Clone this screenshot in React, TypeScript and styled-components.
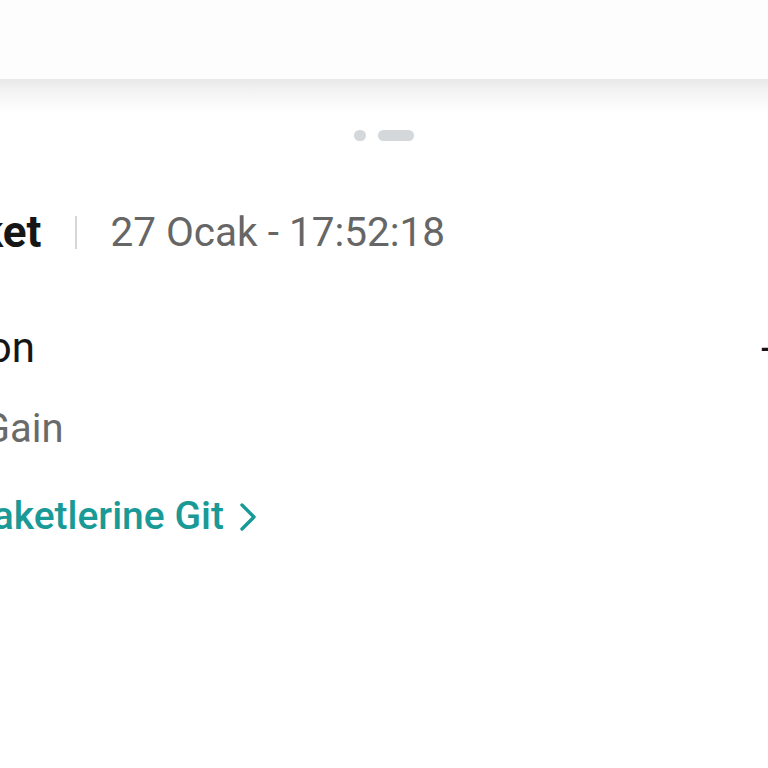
import React from 'react';
import styled, { createGlobalStyle } from 'styled-components';

const GlobalStyle = createGlobalStyle`
  html, body {
    margin: 0;
    padding: 0;
    background: #ffffff;
    overflow: hidden;
  }
  body {
    font-family: Roboto, "Noto Sans", Arial, sans-serif;
    width: 768px;
    height: 768px;
  }
`;

const Screen = styled.div`
  width: 768px;
  height: 768px;
  overflow: hidden;
  background: #ffffff;
  display: flex;
  flex-direction: column;
`;

const TopBar = styled.header`
  height: 79px;
  background: #fdfdfd;
  flex-shrink: 0;
`;

const BarShadow = styled.div`
  height: 34px;
  flex-shrink: 0;
  background: linear-gradient(#e8e8e8 0%, #f3f3f3 35%, #ffffff 100%);
`;

const Pager = styled.div`
  display: flex;
  justify-content: center;
  align-items: center;
  gap: 12px;
  margin-top: 17px;
`;

const PagerDot = styled.span<{ $active?: boolean }>`
  display: block;
  height: 11px;
  width: ${p => (p.$active ? '36px' : '12px')};
  border-radius: 6px;
  background: #d4d8db;
`;

const Content = styled.section`
  margin-left: -36px;
  display: flex;
  flex-direction: column;
`;

const TitleRow = styled.div`
  display: flex;
  align-items: center;
  margin-top: 71px;
  height: 40px;
`;

const Title = styled.h2`
  margin: 0 0 0 -36px;
  font-size: 44px;
  font-weight: 700;
  color: #161616;
  line-height: 1;
`;

const Divider = styled.span`
  width: 2px;
  height: 33px;
  background: #d6d6d6;
  margin: 0 33px 0 34px;
`;

const DateText = styled.span`
  font-size: 40.5px;
  color: #666666;
  line-height: 1;
`;

const ItemRow = styled.div`
  display: grid;
  grid-template-columns: 797px auto;
  align-items: center;
  margin-top: 75px;
`;

const ItemName = styled.span`
  margin-left: -133px;
  font-size: 42px;
  color: #151515;
  line-height: 1;
  white-space: nowrap;
`;

const Amount = styled.span`
  font-size: 42px;
  color: #151515;
  line-height: 1;
  white-space: nowrap;
`;

const SubText = styled.div`
  margin: 40px 0 0 -51px;
  font-size: 40px;
  color: #6a6a6a;
  line-height: 1;
`;

const LinkRow = styled.a`
  margin: 48px 0 0 4px;
  display: flex;
  align-items: center;
  gap: 15px;
  font-size: 39px;
  font-weight: 500;
  color: #1a9a96;
  text-decoration: none;
  line-height: 1;
`;

const Chevron = () => (
  <svg width="18" height="28" viewBox="0 0 18 28" fill="none">
    <path d="M3 2 L15 14 L3 26" stroke="#1a9a96" strokeWidth="3.4" strokeLinecap="round" strokeLinejoin="round" />
  </svg>
);

const App: React.FC = () => {
  return (
    <Screen>
      <GlobalStyle />
      <TopBar />
      <BarShadow />
      <Pager>
        <PagerDot />
        <PagerDot $active />
      </Pager>
      <Content>
        <TitleRow>
          <Title>Paket</Title>
          <Divider />
          <DateText>27 Ocak - 17:52:18</DateText>
        </TitleRow>
        <ItemRow>
          <ItemName>Aktivasyon</ItemName>
          <Amount>-50 TL</Amount>
        </ItemRow>
        <SubText>BiP Gain</SubText>
        <LinkRow href="#">
          Paketlerine Git
          <Chevron />
        </LinkRow>
      </Content>
    </Screen>
  );
};

export default App;
